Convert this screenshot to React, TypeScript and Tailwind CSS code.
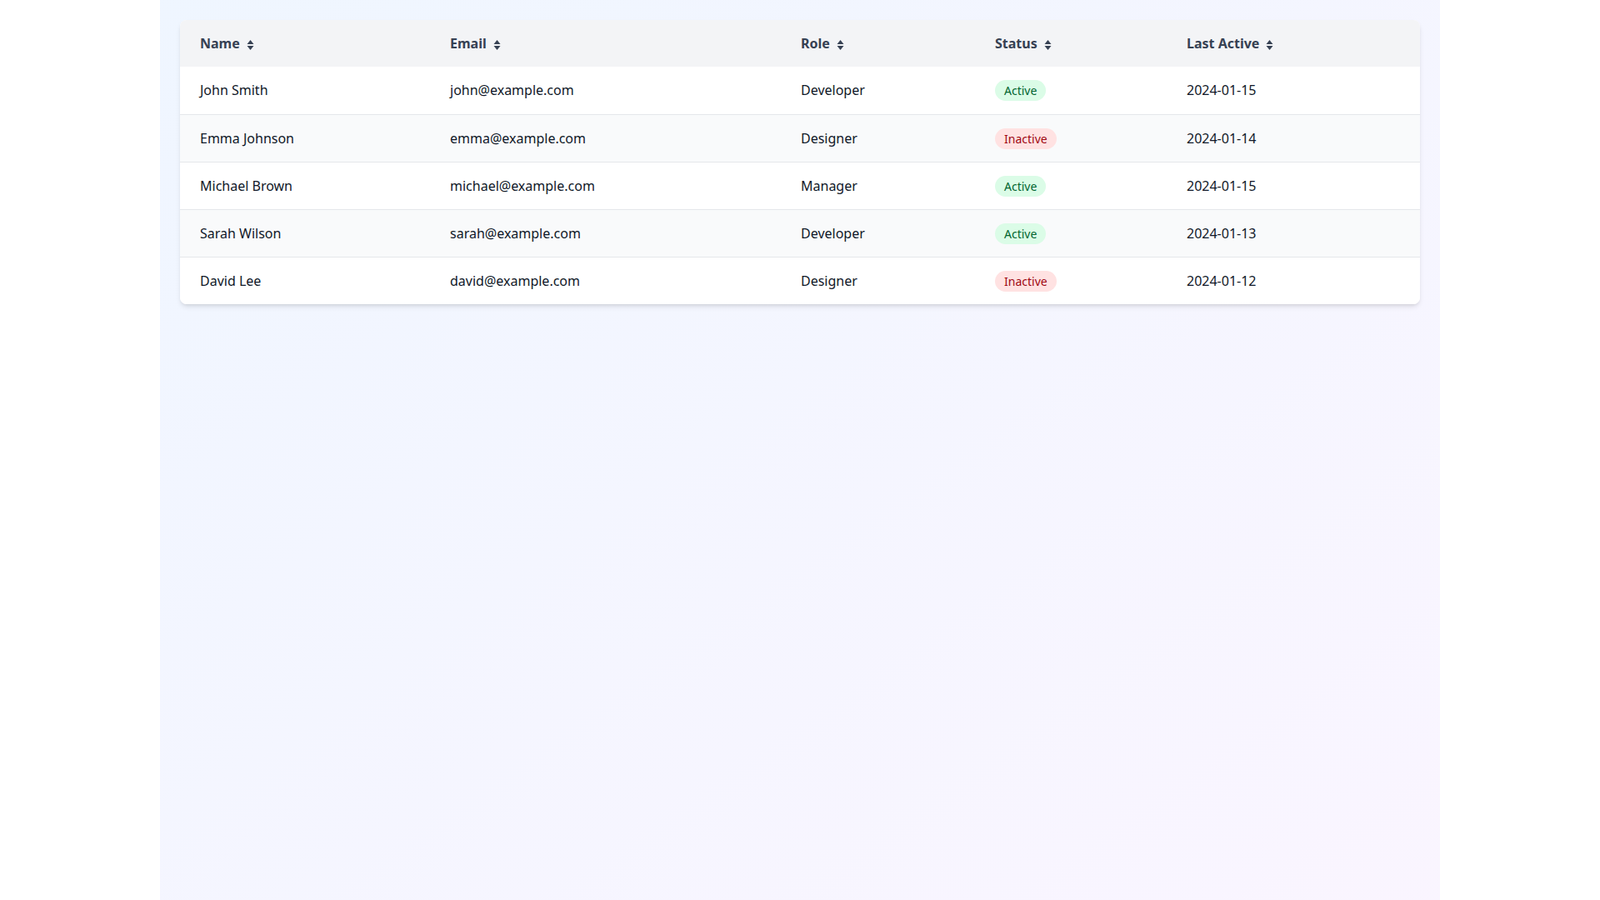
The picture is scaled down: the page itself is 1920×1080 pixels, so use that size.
const rows = [
  { name: "John Smith", email: "john@example.com", role: "Developer", active: true, last: "2024-01-15" },
  { name: "Emma Johnson", email: "emma@example.com", role: "Designer", active: false, last: "2024-01-14" },
  { name: "Michael Brown", email: "michael@example.com", role: "Manager", active: true, last: "2024-01-15" },
  { name: "Sarah Wilson", email: "sarah@example.com", role: "Developer", active: true, last: "2024-01-13" },
  { name: "David Lee", email: "david@example.com", role: "Designer", active: false, last: "2024-01-12" },
];

const cols = [
  { label: "Name", w: "w-[300px]" },
  { label: "Email", w: "w-[421px]" },
  { label: "Role", w: "w-[233px]" },
  { label: "Status", w: "w-[230px]" },
  { label: "Last Active", w: "" },
];

function SortIcon() {
  return (
    <svg width="9" height="14" viewBox="0 0 9 14" className="ml-2 mt-1 text-gray-700">
      <path d="M4.5 1 L8.5 6 H0.5 Z" fill="currentColor" />
      <path d="M4.5 13 L8.5 8 H0.5 Z" fill="currentColor" />
    </svg>
  );
}

export default function App() {
  return (
    <div className="min-h-screen w-full bg-white font-[family-name:'DejaVu_Sans',sans-serif]">
      <div className="mx-auto max-w-[1536px] min-h-screen bg-gradient-to-br from-blue-50 to-purple-50 p-6">
        <div className="rounded-lg bg-white shadow-md overflow-hidden">
          <table className="w-full table-fixed border-collapse text-left">
            <thead className="bg-gray-100">
              <tr className="h-14">
                {cols.map((c) => (
                  <th key={c.label} className={`${c.w} px-6 text-base font-bold text-gray-700`}>
                    <span className="inline-flex items-center">
                      {c.label}
                      <SortIcon />
                    </span>
                  </th>
                ))}
              </tr>
            </thead>
            <tbody>
              {rows.map((r, i) => (
                <tr key={r.name} className={`h-[57px] text-base text-gray-900 ${i > 0 ? "border-t border-gray-200" : ""} ${i % 2 === 1 ? "bg-gray-50" : "bg-white"}`}>
                  <td className="px-6">{r.name}</td>
                  <td className="px-6">{r.email}</td>
                  <td className="px-6">{r.role}</td>
                  <td className="px-6">
                    <span className={`rounded-full px-[11px] py-[3px] text-sm ${r.active ? "bg-green-100 text-green-800" : "bg-red-100 text-red-800"}`}>
                      {r.active ? "Active" : "Inactive"}
                    </span>
                  </td>
                  <td className="px-6">{r.last}</td>
                </tr>
              ))}
            </tbody>
          </table>
        </div>
      </div>
    </div>
  );
}
